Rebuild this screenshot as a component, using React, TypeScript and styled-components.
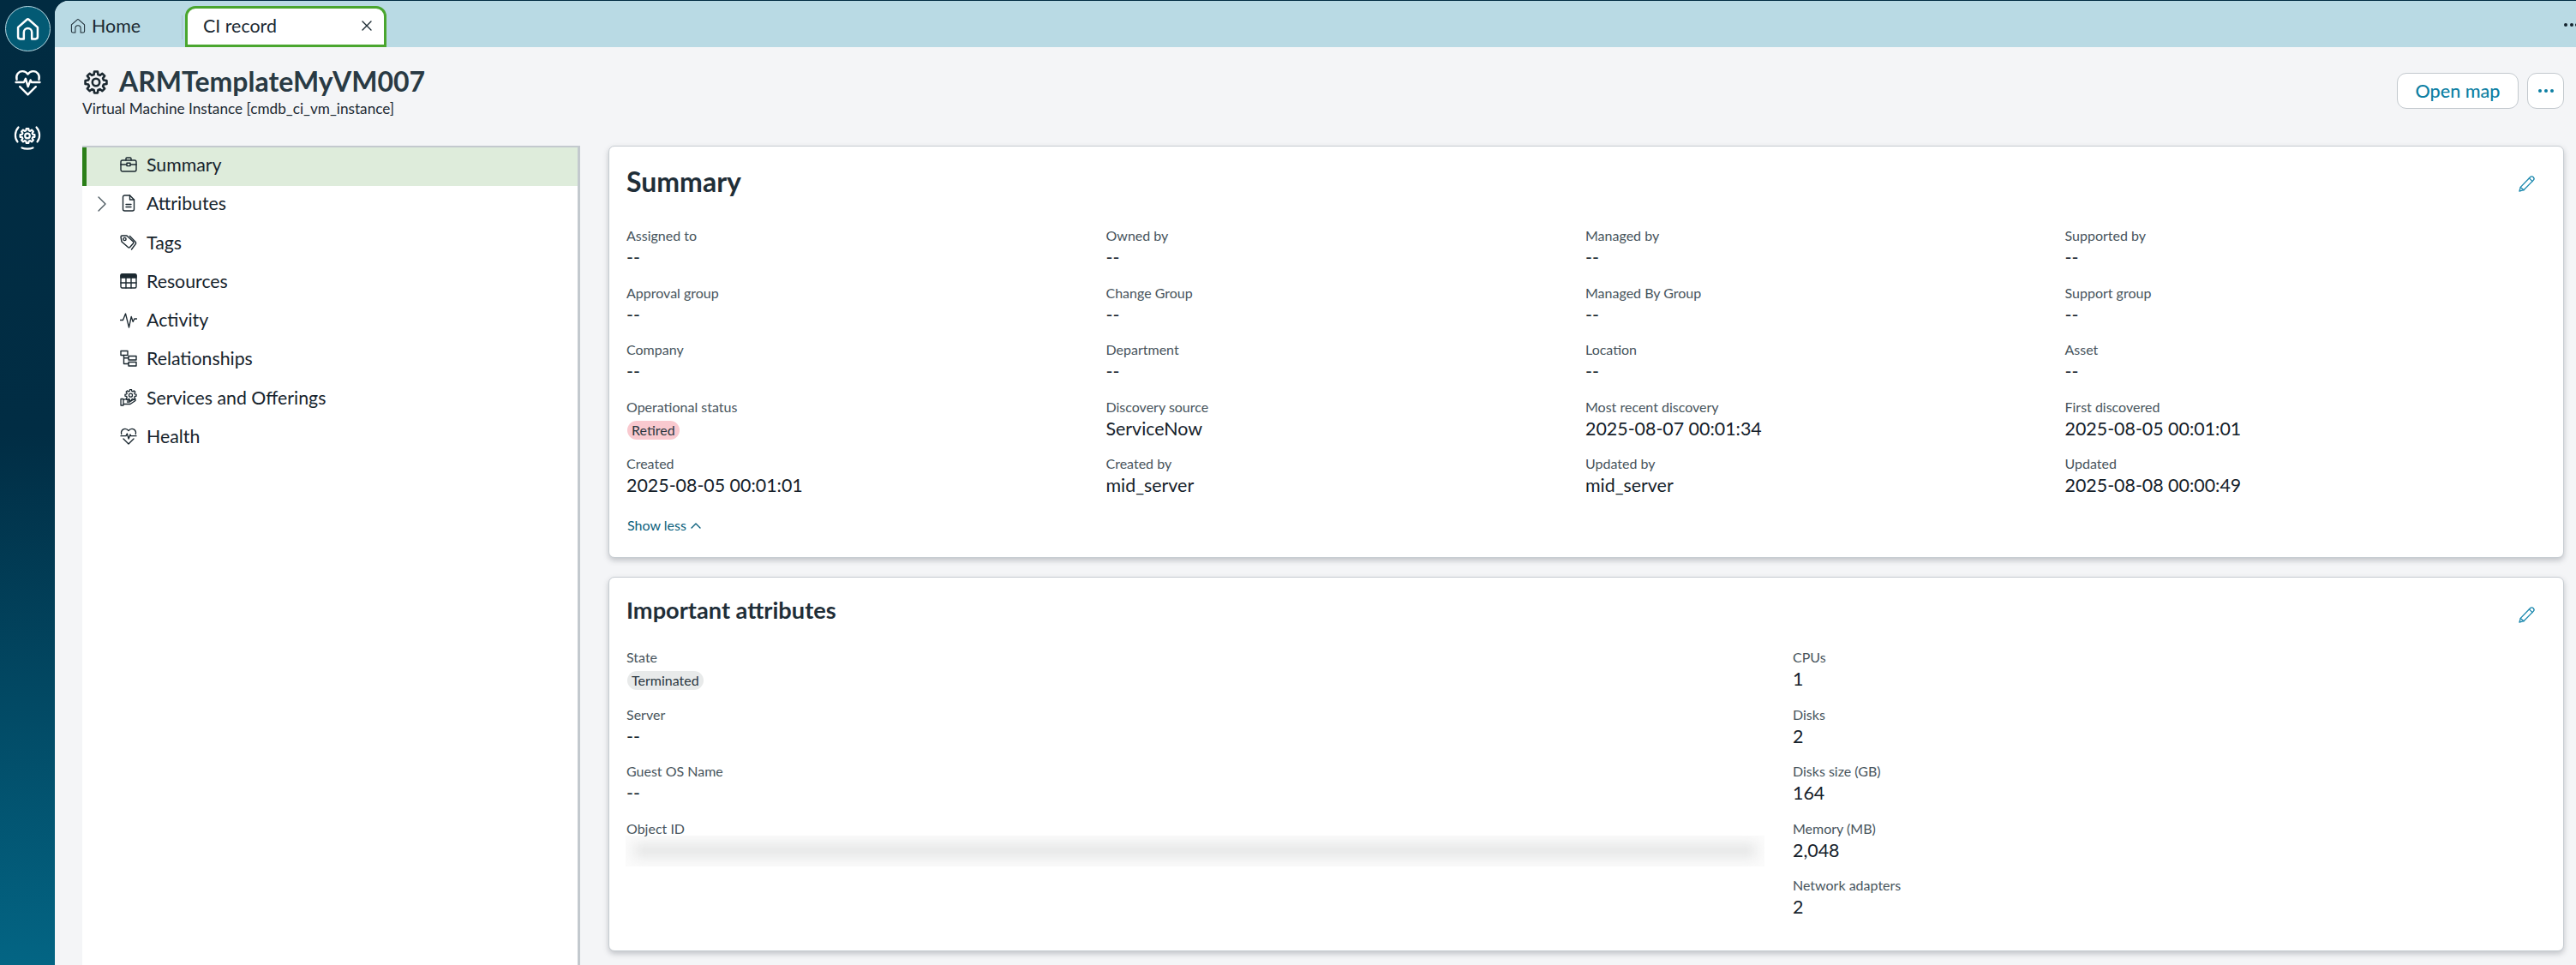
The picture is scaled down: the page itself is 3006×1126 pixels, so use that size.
import React from "react";
import styled, { createGlobalStyle } from "styled-components";

const Global = createGlobalStyle`
  html, body { margin: 0; padding: 0; background: #f4f5f7; }
  body { font-family: Lato, "Open Sans", sans-serif; color: #15212a; overflow: hidden; }
  * { box-sizing: border-box; }
`;

const Page = styled.div`
  display: flex;
  width: 3006px;
  height: 1126px;
  overflow: hidden;
  background: linear-gradient(180deg, #012b41 0%, #012d44 45%, #036584 100%);
`;
const Rail = styled.nav`
  flex: 0 0 64px;
  display: flex;
  flex-direction: column;
  align-items: center;
  padding-top: 7px;
`;
const RailActive = styled.div`
  width: 53px;
  height: 53px;
  border-radius: 50%;
  background: #035a74;
  border: 1.5px solid #b9dae4;
  color: #fff;
  display: flex;
  align-items: center;
  justify-content: center;
  margin-bottom: 20px;
`;
const RailItem = styled.div`
  width: 32px;
  height: 32px;
  margin-bottom: 32px;
  color: #fff;
  display: flex;
  align-items: center;
  justify-content: center;
`;
const Workspace = styled.div`
  flex: 1;
  min-width: 0;
  display: flex;
  flex-direction: column;
  margin-top: 1px;
  background: #f4f5f7;
  border-top-left-radius: 16px;
`;
const TabBar = styled.div`
  height: 54px;
  flex: 0 0 54px;
  background: #b9dae4;
  border-top-left-radius: 16px;
  display: flex;
  align-items: flex-end;
  overflow: hidden;
`;
const HomeTab = styled.div`
  width: 152px;
  height: 48px;
  display: flex;
  align-items: center;
  gap: 7px;
  padding: 0 0 3px 18px;
  font-size: 21.4px;
  color: #1c2a33;
  position: relative;
  &::after {
    content: "";
    position: absolute;
    right: 3px;
    top: 11px;
    height: 28px;
    width: 1px;
    background: #a7c6d0;
  }
`;
const ActiveTab = styled.div`
  width: 235px;
  height: 48px;
  background: #fff;
  border: 3px solid #4aa62f;
  border-radius: 12px 12px 0 0;
  display: flex;
  align-items: center;
  justify-content: space-between;
  padding: 0 13px 3px 18px;
  font-size: 21.4px;
  color: #1c2a33;
`;
const OverflowDots = styled.div`
  margin-left: auto;
  width: 14px;
  height: 48px;
  display: flex;
  align-items: center;
  gap: 2.5px;
  padding-bottom: 5px;
  overflow: hidden;
`;
const Dot = styled.span`
  flex: 0 0 4px;
  width: 4px;
  height: 4px;
  border-radius: 50%;
  background: #14222c;
`;
const Header = styled.header`
  height: 115px;
  flex: 0 0 115px;
  padding: 24px 14px 0 32px;
  display: flex;
  justify-content: space-between;
  align-items: flex-start;
`;
const TitleRow = styled.div`
  display: flex;
  align-items: center;
  gap: 13px;
  padding-left: 2px;
  height: 34px;
`;
const Title = styled.h1`
  margin: 0;
  font-size: 32px;
  line-height: 34px;
  font-weight: 700;
  color: #293a44;
  position: relative;
  top: -1px;
`;
const Subtitle = styled.div`
  font-size: 17.2px;
  line-height: 22px;
  margin-top: 3px;
  color: #1c2a33;
`;
const Actions = styled.div`
  display: flex;
  gap: 10px;
  padding-top: 6px;
`;
const OutlineButton = styled.button<{ $w: number }>`
  width: ${(p) => p.$w}px;
  height: 42px;
  background: #fff;
  border: 1.5px solid #c3c9ce;
  border-radius: 11px;
  color: #0d7fa3;
  font-family: inherit;
  font-size: 21.6px;
  font-weight: 500;
  padding: 0;
  display: flex;
  align-items: center;
  justify-content: center;
  gap: 3px;
`;
const ButtonDot = styled.span`
  width: 4px;
  height: 4px;
  border-radius: 50%;
  background: #0d7fa3;
`;
const Content = styled.div`
  flex: 1;
  min-height: 0;
  display: flex;
  gap: 33px;
  padding: 0 14px 0 32px;
`;
const NavPanel = styled.aside`
  flex: 0 0 581px;
  background: #fff;
  border-top: 2px solid #c3c9ce;
  border-right: 3px solid #c3c9ce;
  height: 100%;
`;
const NavRow = styled.div<{ $active?: boolean }>`
  height: 45.25px;
  display: flex;
  align-items: center;
  padding-left: ${(p) => (p.$active ? "39px" : "44px")};
  padding-bottom: 5px;
  border-left: ${(p) => (p.$active ? "5px solid #2b7f18" : "none")};
  background: ${(p) => (p.$active ? "#deecdb" : "#fff")};
  font-size: 21.3px;
  color: #17242d;
  position: relative;
`;
const Chevron = styled.span`
  position: absolute;
  left: 17px;
  top: 12px;
  display: flex;
  color: #47545c;
`;
const NavIcon = styled.span`
  width: 20px;
  height: 20px;
  margin-right: 11px;
  display: flex;
`;
const Cards = styled.main`
  flex: 1;
  min-width: 0;
  display: flex;
  flex-direction: column;
  gap: 22px;
`;
const Card = styled.section<{ $pad: number; $bottom: number }>`
  background: #fff;
  border: 1px solid #c7cdd2;
  border-radius: 7px;
  padding: ${(p) => p.$pad}px 21px ${(p) => p.$bottom}px 20px;
  box-shadow: 0 3px 6px rgba(60, 70, 80, 0.28);
`;
const CardHead = styled.div<{ $size: number; $lh: number; $mb: number; $iconTop: number }>`
  display: flex;
  justify-content: space-between;
  align-items: flex-start;
  margin-bottom: ${(p) => p.$mb}px;
  h2 {
    margin: 0;
    font-size: ${(p) => p.$size}px;
    line-height: ${(p) => p.$lh}px;
    font-weight: 700;
    color: #1f2e38;
  }
  svg {
    margin: ${(p) => p.$iconTop}px 11px 0 0;
  }
`;
const Grid4 = styled.div`
  display: grid;
  grid-template-columns: repeat(4, 559.5px);
  grid-auto-rows: 66.6px;
`;
const Grid2 = styled.div`
  display: grid;
  grid-template-columns: 1361px 1fr;
`;
const Stack = styled.div`
  display: grid;
  grid-auto-rows: 66.6px;
  min-width: 0;
`;
const Field = styled.div`
  min-width: 0;
`;
const Label = styled.div`
  font-size: 16px;
  line-height: 25px;
  color: #47545c;
`;
const Value = styled.div`
  font-size: 21.4px;
  line-height: 26px;
  color: #15212a;
`;
const Pill = styled.span<{ $bg: string }>`
  display: inline-block;
  height: 22px;
  margin: 4px 0 0 1px;
  padding: 0 5px;
  border-radius: 11px;
  background: ${(p) => p.$bg};
  font-size: 16px;
  line-height: 22px;
  color: #2a3740;
`;
const Redacted = styled.div`
  height: 36px;
  margin: -4px 33px 0 -1px;
  background: #fbfbfb;
  overflow: hidden;
  display: flex;
  align-items: center;
  padding: 0 10px;
`;
const Smudge = styled.span`
  flex: 1;
  height: 17px;
  background: #e6e7e7;
  filter: blur(7px);
`;
const ShowLess = styled.div`
  margin-top: 6px;
  padding-left: 1px;
  font-size: 16px;
  line-height: 24px;
  color: #0b5f7c;
  display: flex;
  align-items: center;
  gap: 5px;
`;

const House = ({ size, sw }: { size: number; sw: number }) => (
  <svg width={size} height={size} viewBox="0 0 26 26" fill="none" stroke="currentColor" strokeWidth={sw} strokeLinejoin="round" strokeLinecap="round">
    <path d="M2 11.5 12 2.6a1.5 1.5 0 0 1 2 0l10 8.9V22a2.5 2.5 0 0 1-2.5 2.5H17.5V17a4.5 4.5 0 0 0-9 0v7.5H4.5A2.5 2.5 0 0 1 2 22Z" />
  </svg>
);

const gearPath = (cx: number, cy: number, ro: number, ri: number, teeth: number) => {
  let d = "";
  const step = (Math.PI * 2) / teeth;
  for (let i = 0; i < teeth; i++) {
    const a = i * step - Math.PI / 2;
    const pts = [
      [ri, a - step * 0.34],
      [ro, a - step * 0.2],
      [ro, a + step * 0.2],
      [ri, a + step * 0.34],
    ];
    pts.forEach(([r, t], j) => {
      d += `${i === 0 && j === 0 ? "M" : "L"}${(cx + r * Math.cos(t)).toFixed(2)} ${(cy + r * Math.sin(t)).toFixed(2)}`;
    });
  }
  return d + "Z";
};

const HeartPulse = ({ size, sw }: { size: number; sw: number }) => (
  <svg width={size} height={size} viewBox="0 0 30 30" fill="none" stroke="currentColor" strokeWidth={sw} strokeLinejoin="round" strokeLinecap="round">
    <path d="M2.5 11.5C1 6.5 4.5 2 9 2c2.5 0 4.5 1.2 6 3.4C16.5 3.2 18.5 2 21 2c4.5 0 8 4.5 6.5 9.5" />
    <path d="M1.5 14.5H10.5L12.5 10.5 15.2 19.5 18 12 19.2 14.5H28.5" />
    <path d="M6 19.5 15 28.5 24 19.5" />
  </svg>
);

const RailGear = () => (
  <svg width="32" height="32" viewBox="0 0 32 32" fill="none" stroke="currentColor" strokeWidth="2.2" strokeLinecap="round" strokeLinejoin="round">
    <path d={gearPath(16, 14.5, 8.5, 6.4, 8)} />
    <circle cx="16" cy="14.5" r="2.8" />
    <path d="M5.5 4.5C1 9.5 0.8 17 4.5 21.5" />
    <path d="M26.5 4.5C31 9.5 31.2 17 27.5 21.5" />
    <path d="M9.5 28.5C13 30 19 30 22.5 28.5" />
  </svg>
);

const TitleGear = () => (
  <svg width="28" height="28" viewBox="0 0 28 28" fill="none" stroke="#1b2830" strokeWidth="2.6" strokeLinejoin="round">
    <path d={gearPath(14, 14, 12.6, 9.3, 8)} />
    <circle cx="14" cy="14" r="4.2" />
  </svg>
);

const base = { width: 20, height: 20, viewBox: "0 0 20 20", fill: "none", stroke: "#1b2830", strokeWidth: 1.4, strokeLinejoin: "round" as const, strokeLinecap: "round" as const };

const Briefcase = () => (
  <svg {...base}>
    <rect x="1" y="5" width="18" height="13" rx="2" />
    <path d="M7 5V3a1 1 0 0 1 1-1h4a1 1 0 0 1 1 1v2M1 10h18" />
    <rect x="8" y="8.2" width="4" height="3.4" fill="#deecdb" />
  </svg>
);
const FileDoc = () => (
  <svg {...base}>
    <path d="M3.5 3a2 2 0 0 1 2-2h6l5 5v11a2 2 0 0 1-2 2h-9a2 2 0 0 1-2-2Z" />
    <path d="M11.5 1v5h5M7 11.5h6M7 14.5h6" />
  </svg>
);
const TagsIcon = () => (
  <svg {...base}>
    <path d="M1 3.5a1.5 1.5 0 0 1 1.5-1.5H8l7.5 7a1.5 1.5 0 0 1 0 2l-4 4.5a1.5 1.5 0 0 1-2 0L2 9Z" />
    <circle cx="5.5" cy="6" r="1.6" />
    <path d="M11.5 2.5l6.5 6.8a2 2 0 0 1 .1 2.6L13.5 18" />
  </svg>
);
const TableIcon = () => (
  <svg {...base}>
    <rect x="1" y="2" width="18" height="16" rx="1.5" />
    <path d="M1 3.5a1.5 1.5 0 0 1 1.5-1.5h15A1.5 1.5 0 0 1 19 3.5V6H1Z" fill="#1b2830" />
    <path d="M7 6v12M13 6v12M1 12h18" />
  </svg>
);
const PulseIcon = () => (
  <svg {...base} strokeWidth={1.3}>
    <path d="M0.5 10.5H3.5L6.5 3l4 16 2.7-12.5 2 6 1.6-3.5h2.7" />
  </svg>
);
const TreeIcon = () => (
  <svg {...base}>
    <rect x="1" y="1.5" width="8" height="5" />
    <rect x="10" y="7.5" width="9" height="4.5" />
    <rect x="10" y="14.5" width="9" height="4.5" />
    <path d="M4.5 6.5V16.5H10M4.5 9.8H10" />
  </svg>
);
const ServiceIcon = () => (
  <svg {...base} strokeWidth={1.3}>
    <path d={gearPath(12.5, 7.2, 6.6, 4.9, 8)} />
    <circle cx="12.5" cy="7.2" r="2" />
    <path d="M1 11.5h3V19H1ZM4 12.5c2-1 3.5-.8 5 .5h2.5c1 0 1 2-.5 2H8.5M4 17.5h8l6-4c.6-1.2-.6-2-1.5-1.5l-4 2" />
  </svg>
);
const Pencil = () => (
  <svg width="20" height="20" viewBox="0 0 20 20" fill="none" stroke="#1a88ae" strokeWidth="1.3" strokeLinejoin="round" strokeLinecap="round">
    <path d="M1 19l1.3-4.6L13.5 2.7a2.6 2.6 0 0 1 3.7 3.7L6 17.7Z" />
    <path d="M2.3 14.4 6 17.7M12.4 3.9l3.7 3.7" />
  </svg>
);
const CloseX = () => (
  <svg width="14" height="14" viewBox="0 0 14 14" stroke="#1c2a33" strokeWidth="1.4" strokeLinecap="round">
    <path d="M2 2l10 10M12 2 2 12" />
  </svg>
);
const ChevronRight = () => (
  <svg width="12" height="18" viewBox="0 0 12 18" fill="none" stroke="currentColor" strokeWidth="1.3" strokeLinecap="round" strokeLinejoin="round">
    <path d="M2 1l8 8-8 8" />
  </svg>
);
const ChevronUp = () => (
  <svg width="12" height="8" viewBox="0 0 12 8" fill="none" stroke="#0b5f7c" strokeWidth="1.4" strokeLinecap="round" strokeLinejoin="round">
    <path d="M1 7l5-5 5 5" />
  </svg>
);

const nav: { label: string; icon: React.ReactNode }[] = [
  { label: "Summary", icon: <Briefcase /> },
  { label: "Attributes", icon: <FileDoc /> },
  { label: "Tags", icon: <TagsIcon /> },
  { label: "Resources", icon: <TableIcon /> },
  { label: "Activity", icon: <PulseIcon /> },
  { label: "Relationships", icon: <TreeIcon /> },
  { label: "Services and Offerings", icon: <ServiceIcon /> },
  { label: "Health", icon: <HeartPulse size={20} sw={2} /> },
];

const summary: [string, string][] = [
  ["Assigned to", "--"], ["Owned by", "--"], ["Managed by", "--"], ["Supported by", "--"],
  ["Approval group", "--"], ["Change Group", "--"], ["Managed By Group", "--"], ["Support group", "--"],
  ["Company", "--"], ["Department", "--"], ["Location", "--"], ["Asset", "--"],
  ["Operational status", "Retired"], ["Discovery source", "ServiceNow"], ["Most recent discovery", "2025-08-07 00:01:34"], ["First discovered", "2025-08-05 00:01:01"],
  ["Created", "2025-08-05 00:01:01"], ["Created by", "mid_server"], ["Updated by", "mid_server"], ["Updated", "2025-08-08 00:00:49"],
];
const right: [string, string][] = [
  ["CPUs", "1"], ["Disks", "2"], ["Disks size (GB)", "164"], ["Memory (MB)", "2,048"], ["Network adapters", "2"],
];

export default function App() {
  return (
    <Page>
      <Global />
      <Rail>
        <RailActive><House size={27} sw={2.4} /></RailActive>
        <RailItem><HeartPulse size={31} sw={2.3} /></RailItem>
        <RailItem><RailGear /></RailItem>
      </Rail>
      <Workspace>
        <TabBar>
          <HomeTab>
            <House size={18} sw={1.5} />
            Home
          </HomeTab>
          <ActiveTab>
            CI record
            <CloseX />
          </ActiveTab>
          <OverflowDots><Dot /><Dot /><Dot /></OverflowDots>
        </TabBar>
        <Header>
          <div>
            <TitleRow>
              <TitleGear />
              <Title>ARMTemplateMyVM007</Title>
            </TitleRow>
            <Subtitle>Virtual Machine Instance [cmdb_ci_vm_instance]</Subtitle>
          </div>
          <Actions>
            <OutlineButton $w={142}>Open map</OutlineButton>
            <OutlineButton $w={43}><ButtonDot /><ButtonDot /><ButtonDot /></OutlineButton>
          </Actions>
        </Header>
        <Content>
          <NavPanel>
            {nav.map((n, i) => (
              <NavRow key={n.label} $active={i === 0}>
                {n.label === "Attributes" && <Chevron><ChevronRight /></Chevron>}
                <NavIcon>{n.icon}</NavIcon>
                {n.label}
              </NavRow>
            ))}
          </NavPanel>
          <Cards>
            <Card $pad={21} $bottom={25}>
              <CardHead $size={32} $lh={40} $mb={30} $iconTop={12}>
                <h2>Summary</h2>
                <Pencil />
              </CardHead>
              <Grid4>
                {summary.map(([l, v]) => (
                  <Field key={l}>
                    <Label>{l}</Label>
                    {v === "Retired" ? <Pill $bg="#f9c9cf">{v}</Pill> : <Value>{v}</Value>}
                  </Field>
                ))}
              </Grid4>
              <ShowLess>Show less <ChevronUp /></ShowLess>
            </Card>
            <Card $pad={20} $bottom={22}>
              <CardHead $size={27.2} $lh={36} $mb={24} $iconTop={13}>
                <h2>Important attributes</h2>
                <Pencil />
              </CardHead>
              <Grid2>
                <Stack>
                  <Field>
                    <Label>State</Label>
                    <Pill $bg="#e8eaea">Terminated</Pill>
                  </Field>
                  <Field><Label>Server</Label><Value>--</Value></Field>
                  <Field><Label>Guest OS Name</Label><Value>--</Value></Field>
                  <Field>
                    <Label>Object ID</Label>
                    <Redacted><Smudge /></Redacted>
                  </Field>
                </Stack>
                <Stack>
                  {right.map(([l, v]) => (
                    <Field key={l}><Label>{l}</Label><Value>{v}</Value></Field>
                  ))}
                </Stack>
              </Grid2>
            </Card>
          </Cards>
        </Content>
      </Workspace>
    </Page>
  );
}
